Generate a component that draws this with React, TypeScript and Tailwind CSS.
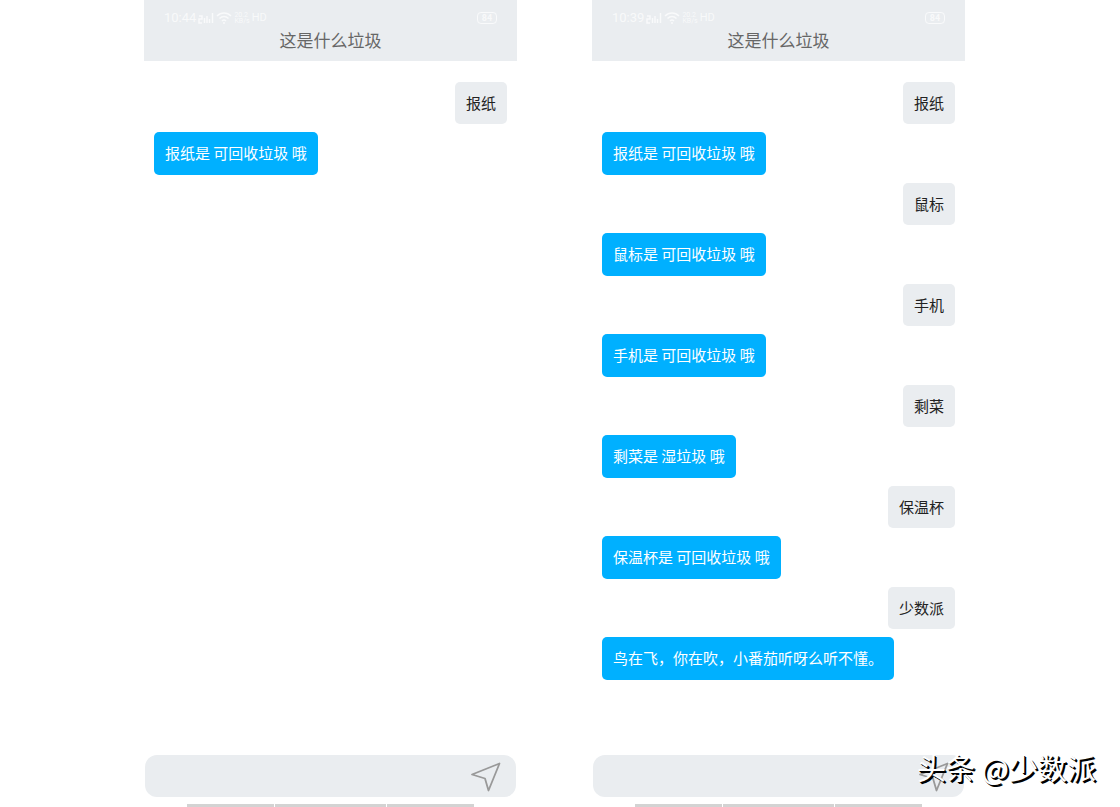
import React, { useId } from "react"

interface Exchange {
  question: string
  answer: string
}

const firstChat: Exchange[] = [{ question: "报纸", answer: "报纸是 可回收垃圾 哦" }]

const fullChat: Exchange[] = [
  { question: "报纸", answer: "报纸是 可回收垃圾 哦" },
  { question: "鼠标", answer: "鼠标是 可回收垃圾 哦" },
  { question: "手机", answer: "手机是 可回收垃圾 哦" },
  { question: "剩菜", answer: "剩菜是 湿垃圾 哦" },
  { question: "保温杯", answer: "保温杯是 可回收垃圾 哦" },
  { question: "少数派", answer: "鸟在飞，你在吹，小番茄听呀么听不懂。" },
]

function SignalIcon() {
  return (
    <svg className="h-3 w-4" viewBox="0 0 16 12" fill="none" stroke="currentColor" strokeWidth="1.5">
      <path d="M1 4h3v3H1v4h3M6.5 11V6M9 11V4M11.500 11V7M14.500 11V1" />
    </svg>
  )
}

function WifiIcon() {
  return (
    <svg className="h-3 w-4" viewBox="0 0 16 12" fill="none" stroke="currentColor" strokeWidth="1.5">
      <path d="M1 4c4-4 10-4 14 0M3.500 6.500c2.600-2.600 6.400-2.600 9 0M6 9c1.200-1.200 2.800-1.200 4 0" />
      <circle cx="8" cy="11" r="1" fill="currentColor" stroke="none" />
    </svg>
  )
}

function StatusBar({ time }: { time: string }) {
  return (
    <div className="flex h-4 items-center justify-between px-5 font-['Roboto',sans-serif] text-[13px] leading-4 text-white/70">
      <div className="flex items-center gap-[2px]">
        <span>{time}</span>
        <SignalIcon />
        <WifiIcon />
        <span className="flex flex-col text-[7px] leading-[6px]">
          <span>20.2</span>
          <span>KB/s</span>
        </span>
        <span className="text-[11px] leading-4">HD</span>
      </div>
      <span className="flex h-3 w-5 items-center justify-center rounded-[4px] border border-white/70 text-[9px] font-bold leading-[10px]">
        84
      </span>
    </div>
  )
}

function Phone({ time, chat }: { time: string; chat: Exchange[] }) {
  const inputId = useId()

  return (
    <section className="flex min-w-0 flex-1 flex-col">
      {/* Header */}
      <header className="bg-[#eaedf0] pb-[9px] pt-[10px]">
        <StatusBar time={time} />
        <h1 className="mt-[2px] text-center text-[17px] leading-6 text-[#666]">这是什么垃圾</h1>
      </header>

      {/* Messages */}
      <ul className="flex flex-col gap-2 px-[10px] pb-4 pt-[21px] text-[15px] leading-5">
        {chat.map((item) => (
          <li key={item.question} className="flex flex-col gap-2">
            <p className="self-end rounded-[5px] bg-[#eaedf0] px-[11px] py-[11px] text-[#222]">{item.question}</p>
            <p className="self-start rounded-[5px] bg-[#00b0ff] px-[11px] pb-3 pt-[11px] text-white">{item.answer}</p>
          </li>
        ))}
      </ul>

      {/* Input */}
      <form
        className="mx-px mt-auto flex h-[42px] items-center rounded-xl bg-[#eaedf0] pl-3 pr-[14px]"
        onSubmit={(e) => e.preventDefault()}
      >
        <label htmlFor={inputId} className="flex min-w-0 flex-1">
          <input id={inputId} type="text" aria-label="垃圾名称" className="h-10 w-full bg-transparent text-[15px] outline-none" />
        </label>
        <button type="submit" aria-label="发送">
          <svg className="h-8 w-8" viewBox="0 0 32 32" fill="none" stroke="#999" strokeWidth="1.800" strokeLinejoin="round">
            <path d="M2 14.500 29.500 3.500 18.500 30.500 15 18.500Z" />
          </svg>
        </button>
      </form>

      {/* Keyboard edge */}
      <div className="mt-[7px] flex h-[3px] justify-center gap-px">
        <span className="w-[87px] bg-[#d3d3d3]" />
        <span className="w-[111px] bg-[#d3d3d3]" />
        <span className="w-[87px] bg-[#d3d3d3]" />
      </div>
    </section>
  )
}

export default function App() {
  return (
    <main
      lang="zh-CN"
      className="relative flex min-h-screen gap-[75px] bg-white pl-36 pr-[155px] font-['Noto_Sans_CJK_SC',sans-serif]"
    >
      <Phone time="10:44" chat={firstChat} />
      <Phone time="10:39" chat={fullChat} />
      <p className="absolute bottom-5 right-6 text-[29px] leading-10 text-white [text-shadow:1px_1px_0_#000,2px_2px_0_#000]">
        头条 @少数派
      </p>
    </main>
  )
}
